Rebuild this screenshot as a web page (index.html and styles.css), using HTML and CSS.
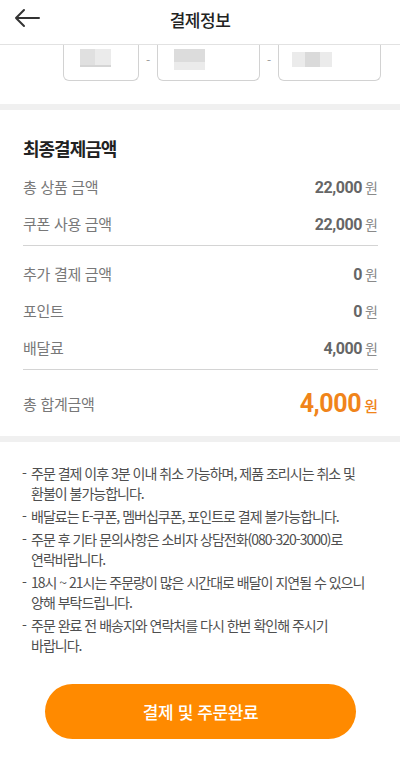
FILE: index.html
```html
<!DOCTYPE html>
<html lang="ko">
<head>
    <meta charset="UTF-8">
    <meta name="viewport" content="width=device-width, initial-scale=1.0">
    <title>결제정보</title>
    <link rel="stylesheet" href="styles.css">
</head>
<body>
    <div class="header">
        <button class="backBtn">
            <svg width="28" height="20" viewBox="0 0 28 20">
                <path d="M3 10 H26 M11 2 L3 10 L11 18" fill="none" stroke="#333" stroke-width="2" stroke-linecap="round" stroke-linejoin="round"/>
            </svg>
        </button>
        <h1>결제정보</h1>
    </div>

    <div class="phoneRow">
        <div class="phoneBox box1"><span class="blur b1"></span></div>
        <span class="dash">-</span>
        <div class="phoneBox box2"><span class="blur b2"></span></div>
        <span class="dash">-</span>
        <div class="phoneBox box3"><span class="blur b3"></span></div>
    </div>

    <div class="band top"></div>

    <div class="summary">
        <h2>최종결제금액</h2>
        <div class="row">
            <span class="label">총 상품 금액</span>
            <span class="amount">22,000<em>원</em></span>
        </div>
        <div class="row">
            <span class="label">쿠폰 사용 금액</span>
            <span class="amount">22,000<em>원</em></span>
        </div>
        <div class="line"></div>
        <div class="row">
            <span class="label">추가 결제 금액</span>
            <span class="amount">0<em>원</em></span>
        </div>
        <div class="row">
            <span class="label">포인트</span>
            <span class="amount">0<em>원</em></span>
        </div>
        <div class="row">
            <span class="label">배달료</span>
            <span class="amount">4,000<em>원</em></span>
        </div>
        <div class="line last"></div>
        <div class="row total">
            <span class="label">총 합계금액</span>
            <span class="amount">4,000<em>원</em></span>
        </div>
    </div>

    <div class="band"></div>

    <ul class="notes">
        <li>주문 결제 이후 3분 이내 취소 가능하며, 제품 조리시는 취소 및 환불이 불가능합니다.</li>
        <li>배달료는 E-쿠폰, 멤버십쿠폰, 포인트로 결제 불가능합니다.</li>
        <li>주문 후 기타 문의사항은 소비자 상담전화(080-320-3000)로 연락바랍니다.</li>
        <li>18시 ~ 21시는 주문량이 많은 시간대로 배달이 지연될 수 있으니 양해 부탁드립니다.</li>
        <li>주문 완료 전 배송지와 연락처를 다시 한번 확인해 주시기 바랍니다.</li>
    </ul>

    <div class="btnDiv">
        <button class="payBtn">결제 및 주문완료</button>
    </div>
</body>
</html>
```

FILE: styles.css
```css
* {
    margin: 0;
    padding: 0;
    box-sizing: border-box;
    list-style: none;
}

body {
    font-family: "Noto Sans CJK KR", "Noto Sans", sans-serif;
    background-color: #fff;
    color: #222;
    width: 400px;
}

.header {
    height: 45px;
    border-bottom: 1px solid #e2e2e2;
    display: flex;
    align-items: center;
    justify-content: center;
    position: relative;
}

.header h1 {
    font-size: 17px;
    font-weight: 500;
    letter-spacing: -0.5px;
    color: #222;
    margin-top: -6px;
}

.backBtn {
    position: absolute;
    left: 13px;
    top: 8px;
    border: none;
    background: none;
    display: flex;
}

.phoneRow {
    display: flex;
    align-items: flex-start;
    padding-left: 63px;
    height: 36px;
}

.phoneBox {
    height: 36px;
    border: 1px solid #d2d2d2;
    border-top: none;
    border-radius: 0 0 6px 6px;
    position: relative;
}

.box1 { width: 76px; }
.box2 { width: 103px; }
.box3 { width: 103px; }

.dash {
    width: 18px;
    text-align: center;
    font-size: 12px;
    color: #999;
    line-height: 36px;
    margin-top: -3px;
}

.blur {
    position: absolute;
    height: 18px;
    top: 4px;
    background: linear-gradient(90deg, #e0e0e0 0%, #e0e0e0 50%, #ebebeb 50%, #ebebeb 100%);
}

.b1 {
    left: 16px;
    width: 31px;
    border-bottom: 2px solid #d5d5d5;
}

.b2 {
    left: 16px;
    width: 31px;
    height: 21px;
    background: linear-gradient(180deg, #dcdcdc 0%, #dcdcdc 60%, #ebebeb 60%);
}

.b3 {
    left: 13px;
    width: 40px;
    height: 15px;
    top: 7px;
    background: linear-gradient(90deg, #ebebeb 0%, #ebebeb 32%, #dadada 32%, #dadada 70%, #ebebeb 70%);
}

.band {
    height: 6px;
    background-color: #f0f0f0;
}

.band.top {
    margin-top: 23px;
}

.summary {
    padding: 26px 22px 8px 23px;
}

.summary h2 {
    font-size: 18px;
    font-weight: 700;
    letter-spacing: -1px;
    line-height: 24px;
    margin-bottom: 8px;
    color: #222;
}

.row {
    height: 37px;
    display: flex;
    align-items: center;
    justify-content: space-between;
}

.label {
    font-size: 15px;
    color: #787878;
    letter-spacing: -0.3px;
}

.amount {
    font-family: Roboto, "Liberation Sans", sans-serif;
    font-size: 16px;
    font-weight: 700;
    color: #666;
    letter-spacing: -0.4px;
    display: flex;
    align-items: baseline;
}

.amount em {
    font-style: normal;
    font-family: "Noto Sans CJK KR", sans-serif;
    font-weight: 400;
    font-size: 14px;
    color: #8a8a8a;
    margin-left: 3px;
    letter-spacing: 0;
}

.line {
    height: 1px;
    background-color: #d4d4d4;
    margin: 3px 0 9px;
}

.line.last {
    margin-bottom: 8px;
}

.total {
    height: 50px;
}

.total .amount {
    font-size: 25px;
    color: #f0841a;
}

.total .amount em {
    font-size: 15px;
    color: #f0841a;
    font-weight: 500;
}

.notes {
    padding: 21px 20px 0 31px;
}

.notes li {
    position: relative;
    font-size: 14px;
    line-height: 20px;
    color: #4f4f4f;
    letter-spacing: -1px;
    word-break: keep-all;
    margin-bottom: 3px;
}

.notes li::before {
    content: "-";
    position: absolute;
    left: -9px;
    top: 0;
}

.btnDiv {
    padding: 26px 44px 28px 45px;
}

.payBtn {
    width: 100%;
    height: 55px;
    border: none;
    border-radius: 28px;
    background-color: #ff8a00;
    color: #fff;
    font-family: "Noto Sans CJK KR", sans-serif;
    font-size: 17px;
    font-weight: 500;
    letter-spacing: -0.4px;
    cursor: pointer;
}
```
